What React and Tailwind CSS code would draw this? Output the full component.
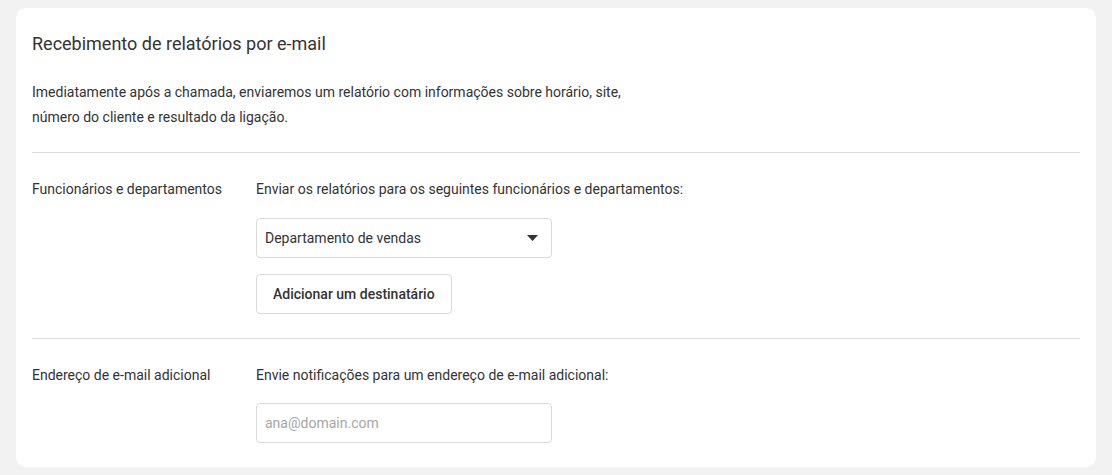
import { useState } from "react";

function Row({ label, children, last }) {
  return (
    <div className={`flex pt-6 pb-6 ${last ? "" : "border-b border-[#dcdcdc]"}`}>
      <div className="w-[224px] shrink-0 text-sm leading-6 text-[#333]">{label}</div>
      <div className="flex flex-col items-start gap-4">{children}</div>
    </div>
  );
}

export default function App() {
  const [dept, setDept] = useState("Departamento de vendas");
  const [email, setEmail] = useState("");

  return (
    <div className="min-h-screen bg-[#f1f2f1] px-4 pt-2 pb-2" style={{ fontFamily: "Roboto, 'Liberation Sans', sans-serif" }}>
      <div className="rounded-[10px] bg-white px-4">
        <div className="pt-6 pb-[22px] border-b border-[#dcdcdc]">
          <h2 className="text-[18px] leading-6 text-[#333]">Recebimento de relatórios por e-mail</h2>
          <p className="mt-6 text-sm leading-[25px] text-[#333]">
            Imediatamente após a chamada, enviaremos um relatório com informações sobre horário, site,
            <br />
            número do cliente e resultado da ligação.
          </p>
        </div>

        <Row label="Funcionários e departamentos">
          <div className="text-sm leading-6 text-[#333]">
            Enviar os relatórios para os seguintes funcionários e departamentos:
          </div>
          <div className="relative mt-px w-[296px]">
            <select
              value={dept}
              onChange={(e) => setDept(e.target.value)}
              className="h-10 w-full appearance-none rounded border border-[#d9d9d9] bg-white pl-2 pr-8 text-sm text-[#333] outline-none"
            >
              <option>Departamento de vendas</option>
              <option>Suporte</option>
            </select>
            <svg className="pointer-events-none absolute right-[14px] top-[17px]" width="11" height="6" viewBox="0 0 11 6">
              <path d="M0 0h11L5.5 6z" fill="#333" />
            </svg>
          </div>
          <button className="h-10 rounded border border-[#d9d9d9] bg-white px-4 text-sm font-medium text-[#333]">
            Adicionar um destinatário
          </button>
        </Row>

        <Row label="Endereço de e-mail adicional" last>
          <div className="text-sm leading-6 text-[#333]">
            Envie notificações para um endereço de e-mail adicional:
          </div>
          <input
            value={email}
            onChange={(e) => setEmail(e.target.value)}
            placeholder="ana@domain.com"
            className="h-10 w-[296px] rounded border border-[#d9d9d9] px-2 text-sm text-[#333] outline-none placeholder:text-[#a6a6a6]"
          />
        </Row>
      </div>
    </div>
  );
}
